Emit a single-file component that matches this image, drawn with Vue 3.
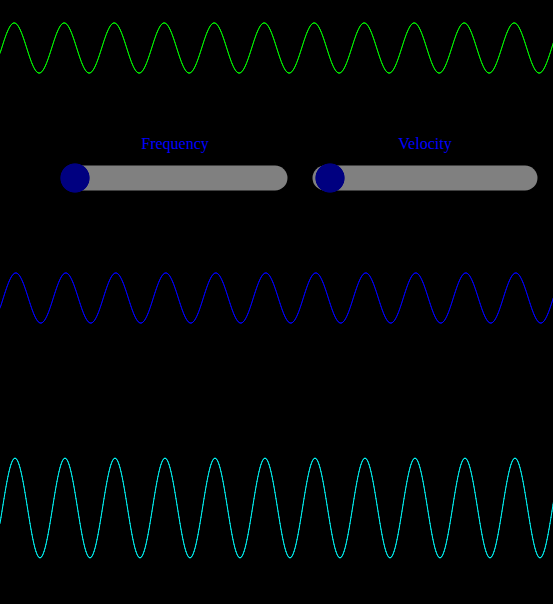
<script setup>
import { computed, onMounted, onUnmounted, ref } from 'vue'

const AMPLITUDE = 25
const width = ref(window.innerWidth)
const frequency = ref(0)
const velocity = ref(5)

const wavelength = computed(() => 50 - frequency.value * 0.2)
const shift = computed(() => velocity.value * 0.16)

function wave(x, peak) {
  return AMPLITUDE * Math.cos((2 * Math.PI * (x - peak)) / wavelength.value)
}

// One short segment per pixel column.
function trace(middle, valueAt) {
  const y = (x) => (middle - valueAt(x)).toFixed(2)
  let path = ''
  for (let x = 0; x <= width.value; x++) {
    path += `M${x} ${y(x)}L${x + 1} ${y(x + 1)}`
  }
  return path
}

const left = (x) => wave(x, 15 - shift.value)
const right = (x) => wave(x, 15 + shift.value)

const leftPath = computed(() => trace(48, left))
const rightPath = computed(() => trace(48, right))
const sumPath = computed(() => trace(60, (x) => left(x) + right(x)))

function measure() {
  width.value = window.innerWidth
}
onMounted(() => window.addEventListener('resize', measure))
onUnmounted(() => window.removeEventListener('resize', measure))
</script>

<template>
  <main class="page">
    <svg class="wave wave-left" aria-hidden="true"><path :d="leftPath" /></svg>

    <form class="controls" @submit.prevent>
      <div class="control">
        <label for="frequency">Frequency</label>
        <div class="slider">
          <svg class="track" viewBox="0 0 230 30" preserveAspectRatio="none" aria-hidden="true">
            <line x1="15" y1="15" x2="215" y2="15" />
          </svg>
          <input id="frequency" v-model.number="frequency" type="range" min="0" max="200" />
        </div>
      </div>
      <div class="control">
        <label for="velocity">Velocity</label>
        <div class="slider">
          <svg class="track" viewBox="0 0 230 30" preserveAspectRatio="none" aria-hidden="true">
            <line x1="15" y1="15" x2="215" y2="15" />
          </svg>
          <input id="velocity" v-model.number="velocity" type="range" min="0" max="200" />
        </div>
      </div>
    </form>

    <svg class="wave wave-right" aria-hidden="true"><path :d="rightPath" /></svg>
    <svg class="wave wave-sum" aria-hidden="true"><path :d="sumPath" /></svg>
  </main>
</template>

<style>
body {
  background: #000;
}
</style>

<style scoped>
.page {
  display: flex;
  flex-direction: column;
  box-sizing: border-box;
  min-height: 100vh;
  overflow: hidden;
  background: #000;
  font-family: "Liberation Serif", "Times New Roman", serif;
}

.wave {
  display: block;
  width: 100%;
  height: 96px;
  fill: none;
  stroke-width: 1px;
  stroke-linecap: square;
}

.wave-left {
  stroke: #0f0;
}

.wave-right {
  margin-top: 57px;
  stroke: #00f;
}

.wave-sum {
  height: 120px;
  margin-top: 102px;
  stroke: #0ff;
}

.controls {
  display: grid;
  grid-template-columns: repeat(2, minmax(0, 230px));
  gap: 20px;
  padding: 38px 13px 0 60px;
}

.control {
  display: flex;
  flex-direction: column;
  gap: 9px;
}

.control label {
  color: #00f;
  font-size: 16px;
  line-height: 20px;
  text-align: center;
}

.slider {
  display: grid;
}

.track,
.slider input {
  grid-area: 1 / 1;
  display: block;
  width: 100%;
  height: 30px;
}

.track line {
  stroke: #808080;
  stroke-width: 25px;
  stroke-linecap: round;
}

.slider input {
  margin: 0;
  appearance: none;
  background: transparent;
  cursor: pointer;
}

.slider input::-webkit-slider-thumb {
  width: 30px;
  height: 30px;
  appearance: none;
  border: 0;
  background: radial-gradient(circle closest-side, #000080 95%, transparent 100%);
}

.slider input::-moz-range-thumb {
  width: 30px;
  height: 30px;
  border: 0;
  border-radius: 0;
  background: radial-gradient(circle closest-side, #000080 95%, transparent 100%);
}
</style>
